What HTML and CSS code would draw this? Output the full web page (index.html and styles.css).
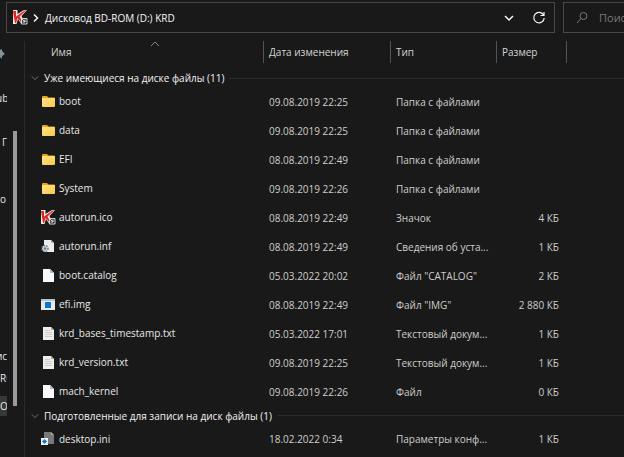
FILE: index.html
```html
<!DOCTYPE html>
<html lang="ru">
<head>
<meta charset="utf-8">
<title>KRD</title>
<link rel="stylesheet" href="styles.css">
</head>
<body>
<svg class="defs" aria-hidden="true">
  <defs>
    <linearGradient id="gold" x1="0" y1="0" x2="1" y2="1"><stop offset="0" stop-color="#ffe48c"/><stop offset="1" stop-color="#fbc943"/></linearGradient>
    <symbol id="folder" viewBox="0 0 15 15"><path d="M1 3q0-1 1-1h4l1.500 1.500H13q1 0 1 1V10H1z" fill="#eba414"/><rect x="1" y="4" width="13" height="9" rx="1" fill="url(#gold)"/></symbol>
    <symbol id="kav" viewBox="0 0 15 15"><path d="M0 0h4.500v4L11 0h3L8.500 6l3 7.500H8L5 9l-1.500 5H0z" fill="#efeaea"/><path d="M0 1h3v5.500L11.500 0.500H13L6.500 6.500l3 5.500H8L4.500 8 3 13H2z" fill="#e22520"/><path d="M8.500 8.500h5.500v5.500H8.500z" fill="#222" stroke="#d5d5d5"/><path d="M8 8.500l4 3M12 9.500v2.500H9.500" stroke="#eee" fill="none"/></symbol>
    <symbol id="page" viewBox="0 0 15 15"><path d="M2 1h7l4 4v9H2z" fill="#fafafa"/><path d="M9 1v4h4z" fill="#bcbcbc"/></symbol>
    <symbol id="text" viewBox="0 0 15 15"><path d="M2 1h8l3 3v10H2z" fill="#eee"/><path d="M10 1v3h3z" fill="#aaa"/><path d="M4 4.500h5M4 6.500h7M4 8.500h7M4 10.500h7" stroke="#cbcbcb"/></symbol>
    <symbol id="gear" viewBox="0 0 15 15"><path d="M3 1h7l3 3v9H3z" fill="#ececec"/><path d="M10 1v3h3z" fill="#aaa"/><circle cx="4" cy="9.500" r="3" fill="#dce1e5" stroke="#75808a" stroke-width="1.500" stroke-dasharray="1.500 1"/><circle cx="4" cy="9.500" r="1.200" fill="#65717a"/></symbol>
    <symbol id="image" viewBox="0 0 15 15"><path d="M0 2h14v11H0z" fill="#ebe8e3"/><path d="M0 2h14v2H0z" fill="#bcc3c8"/><path d="M4 5h6v6H4z" fill="#0878d6"/></symbol>
    <symbol id="ini" viewBox="0 0 15 15"><path d="M3 1h7l3 3v9H3z" fill="#77797b"/><path d="M10 1v3h3z" fill="#aaa"/><path d="M0 7h7v7H0z" fill="#f3f3f3"/><path d="M3.500 8L6 10.500 3.500 13 1 10.500z" fill="#087bd5"/></symbol>
    <symbol id="down" viewBox="0 0 10 10"><path d="M1 3l4 4 4-4" fill="none" stroke="currentColor" stroke-width="1.200"/></symbol>
  </defs>
</svg>
<div class="window">
  <header class="toolbar">
    <div class="address">
      <svg class="icon"><use href="#kav"/></svg>
      <svg class="crumb" viewBox="0 0 10 10"><path d="M3 1.500L6.500 5 3 8.500" fill="none" stroke="currentColor" stroke-width="1.500"/></svg>
      <a class="path" href="#">Дисковод BD-ROM (D:) KRD</a>
      <button class="tool" aria-label="Показать список"><svg viewBox="0 0 14 14"><path d="M3 5l4 4 4-4" fill="none" stroke="currentColor" stroke-width="1.500"/></svg></button>
      <button class="tool" aria-label="Обновить"><svg viewBox="0 0 14 14"><path d="M11.500 4A5.200 5.200 0 1 0 12.200 7M12 1v3.500H8.500" fill="none" stroke="currentColor" stroke-width="1.200"/></svg></button>
    </div>
    <label class="search">
      <svg viewBox="0 0 14 14"><circle cx="8.500" cy="5" r="3.500" fill="none" stroke="currentColor"/><path d="M6 7.500L2 12" stroke="currentColor"/></svg>
      <input type="text" placeholder="Поиск" aria-label="Поиск">
    </label>
  </header>
  <div class="content">
    <aside class="side">
      <nav class="tree">
        <svg class="pin" viewBox="0 0 7 12"><path d="M0 2l2-1v2l3 3-3 2v3L0 9z" fill="#83939b"/></svg>
        <a class="node cut" href="#">ub</a>
        <a class="node indent" href="#">Г</a>
        <a class="node drop" href="#">о</a>
        <a class="node far cut" href="#">ис</a>
        <a class="node" href="#">RO</a>
        <a class="node active" href="#">O</a>
      </nav>
      <div class="scroll"></div>
    </aside>
    <main class="files">
      <table>
        <colgroup><col class="c-name"><col class="c-date"><col class="c-type"><col class="c-size"><col></colgroup>
        <thead>
          <tr>
            <th class="name"><svg class="sort" viewBox="0 0 10 6"><path d="M1 5l4-4 4 4" fill="none" stroke="currentColor"/></svg><span>Имя</span></th>
            <th><span>Дата изменения</span></th><th><span>Тип</span></th><th><span>Размер</span></th><th><span></span></th>
          </tr>
        </thead>
        <tbody>
          <tr class="group"><th colspan="5"><button><svg><use href="#down"/></svg>Уже имеющиеся на диске файлы (11)</button></th></tr>
          <tr><td><svg class="icon"><use href="#folder"/></svg>boot</td><td>09.08.2019 22:25</td><td>Папка с файлами</td><td></td><td></td></tr>
          <tr><td><svg class="icon"><use href="#folder"/></svg>data</td><td>09.08.2019 22:25</td><td>Папка с файлами</td><td></td><td></td></tr>
          <tr><td><svg class="icon"><use href="#folder"/></svg>EFI</td><td>08.08.2019 22:49</td><td>Папка с файлами</td><td></td><td></td></tr>
          <tr><td><svg class="icon"><use href="#folder"/></svg>System</td><td>09.08.2019 22:26</td><td>Папка с файлами</td><td></td><td></td></tr>
          <tr><td><svg class="icon"><use href="#kav"/></svg>autorun.ico</td><td>08.08.2019 22:49</td><td>Значок</td><td>4 КБ</td><td></td></tr>
          <tr><td><svg class="icon"><use href="#gear"/></svg>autorun.inf</td><td>08.08.2019 22:49</td><td>Сведения об уста...</td><td>1 КБ</td><td></td></tr>
          <tr><td><svg class="icon"><use href="#page"/></svg>boot.catalog</td><td>05.03.2022 20:02</td><td>Файл "CATALOG"</td><td>2 КБ</td><td></td></tr>
          <tr><td><svg class="icon"><use href="#image"/></svg>efi.img</td><td>08.08.2019 22:49</td><td>Файл "IMG"</td><td>2 880 КБ</td><td></td></tr>
          <tr><td><svg class="icon"><use href="#text"/></svg>krd_bases_timestamp.txt</td><td>05.03.2022 17:01</td><td>Текстовый докум...</td><td>1 КБ</td><td></td></tr>
          <tr><td><svg class="icon"><use href="#text"/></svg>krd_version.txt</td><td>09.08.2019 22:25</td><td>Текстовый докум...</td><td>1 КБ</td><td></td></tr>
          <tr><td><svg class="icon"><use href="#page"/></svg>mach_kernel</td><td>09.08.2019 22:26</td><td>Файл</td><td>0 КБ</td><td></td></tr>
          <tr class="group"><th colspan="5"><button><svg><use href="#down"/></svg>Подготовленные для записи на диск файлы (1)</button></th></tr>
          <tr><td><svg class="icon"><use href="#ini"/></svg>desktop.ini</td><td>18.02.2022 0:34</td><td>Параметры конф...</td><td>1 КБ</td><td></td></tr>
        </tbody>
      </table>
    </main>
  </div>
</div>
</body>
</html>
```
FILE: styles.css
```css
* { box-sizing: border-box; }
body {
  margin: 0;
  background: #191919;
  color: #e8e8e8;
  font: 10px/16px "Open Sans", "Noto Sans", sans-serif;
  overflow: hidden;
}
a { color: inherit; text-decoration: none; }
button { padding: 0; border: 0; background: none; color: inherit; font: inherit; }
svg { display: block; flex: none; }
.defs { position: absolute; width: 0; height: 0; }
.window { display: flex; flex-direction: column; height: 100vh; }

.toolbar { display: flex; gap: 8px; padding: 2px 0 0 6px; }
.address, .search { display: flex; align-items: center; height: 31px; border: 1px solid #484848; }
.address { flex: 1; padding: 0 8px 0 6px; color: #f6f6f6; }
.icon { width: 15px; height: 15px; }
.crumb { width: 10px; height: 10px; margin: 0 4px 0 3px; }
.path { flex: 1; }
.tool { width: 14px; height: 14px; margin-left: 16px; }
.tool svg { width: 14px; height: 14px; }
.search { width: 61px; border-right: 0; padding-left: 11px; color: #777; font-size: 11px; overflow: hidden; }
.search svg { width: 14px; height: 14px; margin-right: 10px; }
.search input { flex: none; width: 120px; padding: 0; border: 0; outline: 0; background: none; color: inherit; font: inherit; }
.search input::placeholder { color: #777; opacity: 1; }

.content { display: flex; flex: 1; min-height: 0; padding-top: 8px; }
.side { display: flex; gap: 6px; width: 25px; border-right: 1px solid #2b2b2b; }
.tree { width: 7px; overflow: hidden; padding-top: 7px; }
.pin { width: 7px; height: 12px; margin-bottom: 28px; }
.node { display: block; height: 20px; margin-bottom: 2px; line-height: 20px; }
.cut { margin-left: -4px; }
.indent { margin-top: 24px; padding-left: 2px; }
.drop { margin-top: 37px; }
.far { margin-top: 137px; }
.active { margin-top: 8px; background: #383838; }
.scroll { width: 4px; height: 275px; margin-top: 90px; background: #9a9a9a; }

.files { flex: 1; min-width: 0; padding-bottom: 3px; }
table { width: 100%; height: 100%; table-layout: fixed; border-collapse: collapse; }
.c-name { width: 238px; }
.c-date { width: 127px; }
.c-type { width: 106px; }
.c-size { width: 70px; }
th, td { padding: 0; font-weight: 400; text-align: left; white-space: nowrap; }
thead tr { height: 28px; }
thead th { vertical-align: top; }
thead span { display: block; height: 22px; padding-left: 5px; border-left: 1px solid #555; line-height: 22px; color: #d4d4d4; }
thead .name { position: relative; }
thead .name span { border: 0; padding-left: 26px; }
.sort { position: absolute; left: 125px; top: 0; width: 10px; height: 6px; color: #888; }
tbody tr { height: 28px; }
tbody .group { height: 18px; }
td:nth-child(1) { padding-left: 16px; }
td:nth-child(2), td:nth-child(3) { padding-left: 6px; color: #cecece; }
td:nth-child(4) { padding-right: 7px; text-align: right; color: #cecece; }
td .icon { display: inline-block; margin: 0 3px 2px 0; vertical-align: middle; }
.group button { display: flex; align-items: center; gap: 5px; width: 100%; padding-left: 6px; color: #f2f2f2; }
.group button svg { width: 8px; height: 8px; color: #777; }
.group button::after { content: ""; flex: 1; height: 1px; background: #2b2b2b; }
```
